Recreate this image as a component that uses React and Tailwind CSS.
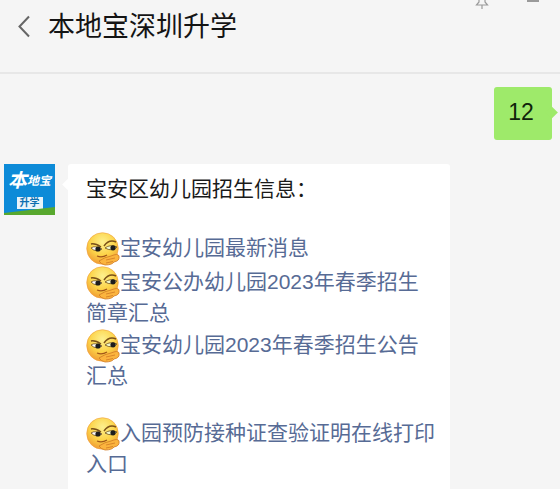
const Emoji = () => (
  <svg width="34" height="34" viewBox="0 0 34 34" className="inline-block align-[-6px] -mb-[4px] translate-y-[1px]">
    <defs>
      <radialGradient id="fg" cx="0.5" cy="0.3" r="0.8">
        <stop offset="0" stopColor="#fdf08f" />
        <stop offset="0.5" stopColor="#fcd348" />
        <stop offset="1" stopColor="#ec8a2e" />
      </radialGradient>
    </defs>
    <circle cx="16.5" cy="16.5" r="15.8" fill="url(#fg)" stroke="#f0a040" strokeWidth="0.6" />
    <path d="M5 12 Q9 11 15 15" stroke="#7a5018" strokeWidth="1.5" fill="none" />
    <path d="M18 14 Q23 7 30 10" stroke="#7a5018" strokeWidth="1.5" fill="none" />
    <path d="M5 16 Q9 13 16 17 Q10 21 5 16 Z" fill="#fff" stroke="#5a3a10" strokeWidth="0.7" />
    <path d="M19 16 Q24 12 31 15 Q26 20 19 16 Z" fill="#eef6c8" stroke="#5a3a10" strokeWidth="0.7" />
    <circle cx="12" cy="17" r="2.6" fill="#1d1d1d" />
    <circle cx="27" cy="15.8" r="2.6" fill="#1d1d1d" />
    <path d="M11 24 Q16 26 21 23" stroke="#a0551a" strokeWidth="1.3" fill="none" />
    <path d="M13 29 Q19 25 25 24 Q32 21 33 24 Q34 29 28 30 Q26 33 19 33 Q15 32 13 29 Z" fill="#fbb43e" stroke="#cf7a24" strokeWidth="0.8" />
    <path d="M20 28 L29 26 M20 31 L27 29.5" stroke="#cf7a24" strokeWidth="0.8" />
  </svg>
);

const Link = ({ children }) => <span className="text-[#576b95]">{children}</span>;

export default function App() {
  return (
    <div
      className="w-[560px] h-[489px] overflow-hidden bg-[#f5f5f5] flex flex-col"
      style={{ fontFamily: '"Liberation Sans","Noto Sans CJK SC",sans-serif' }}
    >
      <header className="h-[74px] shrink-0 border-b-2 border-[#e7e7e7] relative flex items-start pl-[17px] pt-[13px]">
        <svg width="14" height="24" viewBox="0 0 14 24" className="shrink-0 mr-[17px] mt-[2px]">
          <path d="M12 1.5 L2.5 11.5 L12 21.5" fill="none" stroke="#666" strokeWidth="2" />
        </svg>
        <h1 className="text-[27px] leading-[28px] font-normal text-[#141414]">本地宝深圳升学</h1>
        <svg width="14" height="9" viewBox="0 0 14 9" className="absolute left-[475px] top-0">
          <path d="M4 0 V2 L1.5 5 H12.5 L10 2 V0 M7 5 V9" fill="none" stroke="#9a9a9a" strokeWidth="1.2" />
        </svg>
        <div className="absolute left-[527px] top-0 w-[12px] h-[2px] bg-[#9a9a9a]" />
      </header>

      <div className="flex justify-end pr-[8px] mt-[13px] shrink-0">
        <div className="relative w-[58px] h-[53px] rounded-[3px] bg-[#9eea6a] flex items-center justify-center pr-[4px] pb-[3px] text-[23px] text-[#10240a]">
          12
          <span className="absolute right-[-4px] top-[21px] w-[9px] h-[9px] rotate-45 bg-[#9eea6a]" />
        </div>
      </div>

      <div className="flex items-start mt-[24px] pl-[4px]">
        <div className="relative w-[51px] h-[51px] shrink-0 bg-[#0d8bd8] overflow-hidden flex flex-col items-center">
          <div className="flex items-center mt-[7px] text-white font-bold italic leading-none">
            <span className="text-[19px]">本</span>
            <span className="text-[12px]">地宝</span>
          </div>
          <div className="mt-[7px] w-[26px] h-[12px] bg-[#e8f4fb] text-[#0d6fb0] text-[10px] leading-[12px] text-center font-bold">升学</div>
          <svg width="51" height="8" viewBox="0 0 51 8" className="absolute left-0 bottom-0">
            <path d="M0 6 L51 0 V8 H0 Z" fill="#58a82e" />
          </svg>
        </div>
        <div className="relative ml-[13px] w-[382px] bg-white rounded-[3px] pl-[18px] pr-[12px] pt-[9px] pb-[40px] text-[21px] leading-[31px] text-[#1a1a1a]">
          <span className="absolute left-[-4px] top-[16px] w-[9px] h-[9px] rotate-45 bg-white" />
          <div>宝安区幼儿园招生信息：</div>
          <div className="h-[27px]" />
          <div><Emoji /><Link>宝安幼儿园最新消息</Link></div>
          <div className="mt-[2px]"><Emoji /><Link>宝安公办幼儿园2023年春季招生简章汇总</Link></div>
          <div><Emoji /><Link>宝安幼儿园2023年春季招生公告汇总</Link></div>
          <div className="h-[25px]" />
          <div><Emoji /><Link>入园预防接种证查验证明在线打印入口</Link></div>
        </div>
      </div>
    </div>
  );
}
